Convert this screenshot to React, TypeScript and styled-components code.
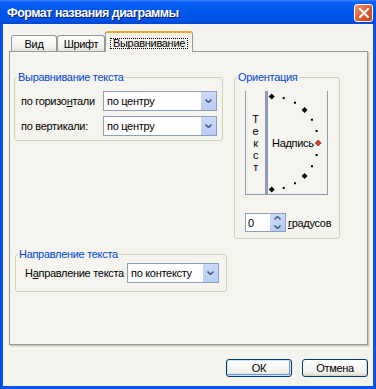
import styled, { createGlobalStyle } from "styled-components";

const GlobalStyle = createGlobalStyle`
  html, body {
    margin: 0;
    padding: 0;
    background: #ffffff;
  }
  body {
    font-family: "Liberation Sans", Arial, sans-serif;
    font-size: 11px;
    letter-spacing: -0.3px;
    color: #000000;
  }
`;

const Window = styled.div`
  width: 376px;
  height: 389px;
  box-sizing: border-box;
  display: flex;
  flex-direction: column;
  background: linear-gradient(to right, #0a3ad0 0, #0556f2 1px, #0556f2 375px, #0a3ad0 376px);
`;

const TitleBar = styled.div`
  height: 24px;
  flex: none;
  display: flex;
  align-items: center;
  padding: 0 3px 0 7px;
  background: linear-gradient(#3b86ff 0, #0a60f2 2px, #0058ee 40%, #0052e6 85%, #0046cf 100%);
`;

const Title = styled.div`
  flex: 1;
  padding-top: 1px;
  color: #ffffff;
  font-weight: bold;
  font-size: 12.5px;
  letter-spacing: -0.5px;
  text-shadow: 1px 1px 0 #0a1c70;
  white-space: nowrap;
`;

const CloseButton = styled.div`
  width: 19px;
  height: 18px;
  margin-top: 2px;
  box-sizing: border-box;
  border: 1px solid #ffffff;
  border-radius: 3px;
  background: linear-gradient(135deg, #f39a7c 0, #e2623a 45%, #c6411c 100%);
  display: flex;
  align-items: center;
  justify-content: center;
`;

const Client = styled.div`
  flex: 1;
  margin: 0 3px 3px;
  padding: 7px 5px 0 6px;
  background: #f4f3ee;
  display: flex;
  flex-direction: column;
`;

const TabRow = styled.div`
  height: 21px;
  display: flex;
  align-items: flex-start;
  padding-left: 2px;
  margin-bottom: -1px;
  position: relative;
  z-index: 1;
`;

const Tab = styled.div<{ $w: number; $active?: boolean }>`
  width: ${p => p.$w}px;
  height: ${p => (p.$active ? 21 : 16)}px;
  margin-top: ${p => (p.$active ? 0 : 4)}px;
  box-sizing: border-box;
  display: flex;
  align-items: center;
  justify-content: center;
  padding-top: ${p => (p.$active ? 2 : 0)}px;
  border: 1px solid #919b9c;
  border-bottom: none;
  border-top: ${p => (p.$active ? "2px solid #f2a33c" : "1px solid #919b9c")};
  border-radius: 3px 3px 0 0;
  background: ${p => (p.$active ? "#f5f4ef" : "linear-gradient(#ffffff, #f2f1ec 70%, #e6e4dc)")};
`;

const FocusRing = styled.span`
  border: 1px dotted #000000;
  padding: 0 2px;
  line-height: 9px;
`;

const TabPanel = styled.div`
  height: 294px;
  box-sizing: border-box;
  border: 1px solid #919b9c;
  background: #f5f4ef;
  box-shadow: 1px 1px 0 #cdcabb, 2px 2px 0 #e1dfd4;
  padding: 25px 0 0 4px;
  display: flex;
  align-items: flex-start;
  gap: 7px;
`;

const Column = styled.div`
  display: flex;
  flex-direction: column;
`;

const GroupBox = styled.div<{ $w: number; $pad: string; $top?: number; $left?: number }>`
  position: relative;
  width: ${p => p.$w}px;
  box-sizing: border-box;
  margin-top: ${p => p.$top ?? 0}px;
  margin-left: ${p => p.$left ?? 0}px;
  padding: ${p => p.$pad};
  border: 1px solid #d0d0bf;
  border-radius: 3px;
`;

const Legend = styled.span`
  position: absolute;
  top: -7px;
  left: 2px;
  padding: 0 1px;
  line-height: 13px;
  color: #0046d5;
  background: #f5f4ef;
  white-space: nowrap;
`;

const Rows = styled.div`
  display: flex;
  flex-direction: column;
  gap: 5px;
`;

const Row = styled.div`
  display: flex;
  align-items: center;
`;

const Label = styled.span<{ $w: number }>`
  width: ${p => p.$w}px;
  flex: none;
  white-space: nowrap;
`;

const U = styled.span`
  text-decoration: underline;
`;

const Combo = styled.div<{ $w: number }>`
  width: ${p => p.$w}px;
  height: 20px;
  box-sizing: border-box;
  border: 1px solid #8d9fb9;
  background: #ffffff;
  display: flex;
  align-items: stretch;
`;

const ComboText = styled.span`
  flex: 1;
  display: flex;
  align-items: center;
  padding-left: 3px;
  white-space: nowrap;
  overflow: hidden;
`;

const DropButton = styled.span`
  width: 15px;
  flex: none;
  display: flex;
  align-items: center;
  justify-content: center;
  background: linear-gradient(#cbdafc, #b9ccf6);
`;

const OrientInner = styled.div`
  display: flex;
  height: 104px;
`;

const VerticalBox = styled.div`
  width: 21px;
  box-sizing: border-box;
  border: 1px solid #8e9cb6;
  border-top: none;
  display: flex;
  flex-direction: column;
  align-items: center;
  justify-content: center;
  line-height: 12px;
`;

const DialBox = styled.div`
  width: 62px;
  box-sizing: border-box;
  border: 1px solid #8e9cb6;
  border-left-width: 2px;
  border-top: none;
  position: relative;
  display: flex;
  align-items: center;
  padding-left: 4px;
`;

const DialSvg = styled.svg`
  position: absolute;
  left: 0;
  top: 0;
  overflow: visible;
`;

const SpinRow = styled.div`
  display: flex;
  align-items: center;
  gap: 2px;
  margin-top: 18px;
`;

const SpinBox = styled.div`
  width: 41px;
  height: 19px;
  box-sizing: border-box;
  border: 1px solid #8d9fb9;
  background: #ffffff;
  display: flex;
`;

const SpinValue = styled.span`
  flex: 1;
  display: flex;
  align-items: center;
  padding-left: 2px;
`;

const SpinButtons = styled.span`
  width: 15px;
  display: flex;
  flex-direction: column;
  background: linear-gradient(#cbdafc, #b9ccf6);
`;

const SpinHalf = styled.span`
  flex: 1;
  display: flex;
  align-items: center;
  justify-content: center;
`;

const ButtonRow = styled.div`
  display: flex;
  justify-content: flex-end;
  gap: 10px;
  margin-top: 14px;
`;

const Button = styled.button<{ $default?: boolean }>`
  width: 66px;
  height: 18px;
  box-sizing: border-box;
  padding: 0;
  font: inherit;
  font-size: 11px;
  letter-spacing: -0.3px;
  color: #000000;
  border: 1px solid #003c74;
  border-radius: 3px;
  background: linear-gradient(#ffffff, #f3f2ed 75%, #dcd8cc);
  box-shadow: ${p =>
    p.$default
      ? "inset 0 0 0 1px #cfe2ff, inset -1px -1px 0 1px #6a8ff0"
      : "inset -1px -1px 0 #d8d3c6"};
`;

const Chevron = ({ up }: { up?: boolean }) => (
  <svg width="7" height="4" viewBox="0 0 7 4">
    <path
      d={up ? "M0.5 3.5 L3.5 0.5 L6.5 3.5" : "M0.5 0.5 L3.5 3.5 L6.5 0.5"}
      fill="none"
      stroke="#4d6185"
      strokeWidth="1.6"
    />
  </svg>
);

const ComboBox = ({ w, value }: { w: number; value: string }) => (
  <Combo $w={w}>
    <ComboText>{value}</ComboText>
    <DropButton>
      <Chevron />
    </DropButton>
  </Combo>
);

const Dial = () => {
  const cx = 3.7;
  const cy = 52;
  const r = 46.5;
  const marks = Array.from({ length: 13 }, (_, k) => {
    const t = (k * 15 * Math.PI) / 180;
    return { k, x: cx + r * Math.sin(t), y: cy - r * Math.cos(t) };
  });
  return (
    <DialSvg width="58" height="103">
      {marks.map(m =>
        m.k % 3 === 0 ? (
          <path
            key={m.k}
            d={`M${m.x - 3} ${m.y} L${m.x} ${m.y - 3} L${m.x + 3} ${m.y} L${m.x} ${m.y + 3} Z`}
            fill={m.k === 6 ? "#d2401e" : "#000000"}
            stroke={m.k === 6 ? "#6a1a0c" : "none"}
            strokeWidth="0.6"
          />
        ) : (
          <rect key={m.k} x={m.x - 1} y={m.y - 1} width="2" height="2" fill="#000000" />
        )
      )}
    </DialSvg>
  );
};

export default function App() {
  return (
    <>
      <GlobalStyle />
      <Window>
        <TitleBar>
          <Title>Формат названия диаграммы</Title>
          <CloseButton>
            <svg width="10" height="10" viewBox="0 0 10 10">
              <path d="M1 1 L9 9 M9 1 L1 9" stroke="#ffffff" strokeWidth="2" strokeLinecap="square" />
            </svg>
          </CloseButton>
        </TitleBar>
        <Client>
          <TabRow>
            <Tab $w={46}>Вид</Tab>
            <Tab $w={48}>Шрифт</Tab>
            <Tab $w={88} $active>
              <FocusRing>Выравнивание</FocusRing>
            </Tab>
          </TabRow>
          <TabPanel>
            <Column>
              <GroupBox $w={209} $pad="13px 5px 4px 6px">
                <Legend>Выравнивание текста</Legend>
                <Rows>
                  <Row>
                    <Label $w={82}>
                      по горизо<U>н</U>тали
                    </Label>
                    <ComboBox w={114} value="по центру" />
                  </Row>
                  <Row>
                    <Label $w={82}>по вертикали:</Label>
                    <ComboBox w={114} value="по центру" />
                  </Row>
                </Rows>
              </GroupBox>
              <GroupBox $w={212} $pad="8px 6px 8px 9px" $top={113} $left={1}>
                <Legend>Направление текста</Legend>
                <Row>
                  <Label $w={102}>
                    Н<U>а</U>правление текста
                  </Label>
                  <ComboBox w={92} value="по контексту" />
                </Row>
              </GroupBox>
            </Column>
            <GroupBox $w={106} $pad="13px 0 6px 10px">
              <Legend>Ориентация</Legend>
              <OrientInner>
                <VerticalBox>
                  <span>Т</span>
                  <span>е</span>
                  <span>к</span>
                  <span>с</span>
                  <span>т</span>
                </VerticalBox>
                <DialBox>
                  <Dial />
                  <span>Надпись</span>
                </DialBox>
              </OrientInner>
              <SpinRow>
                <SpinBox>
                  <SpinValue>0</SpinValue>
                  <SpinButtons>
                    <SpinHalf>
                      <Chevron up />
                    </SpinHalf>
                    <SpinHalf>
                      <Chevron />
                    </SpinHalf>
                  </SpinButtons>
                </SpinBox>
                <span>
                  <U>г</U>радусов
                </span>
              </SpinRow>
            </GroupBox>
          </TabPanel>
          <ButtonRow>
            <Button $default>ОК</Button>
            <Button>Отмена</Button>
          </ButtonRow>
        </Client>
      </Window>
    </>
  );
}
